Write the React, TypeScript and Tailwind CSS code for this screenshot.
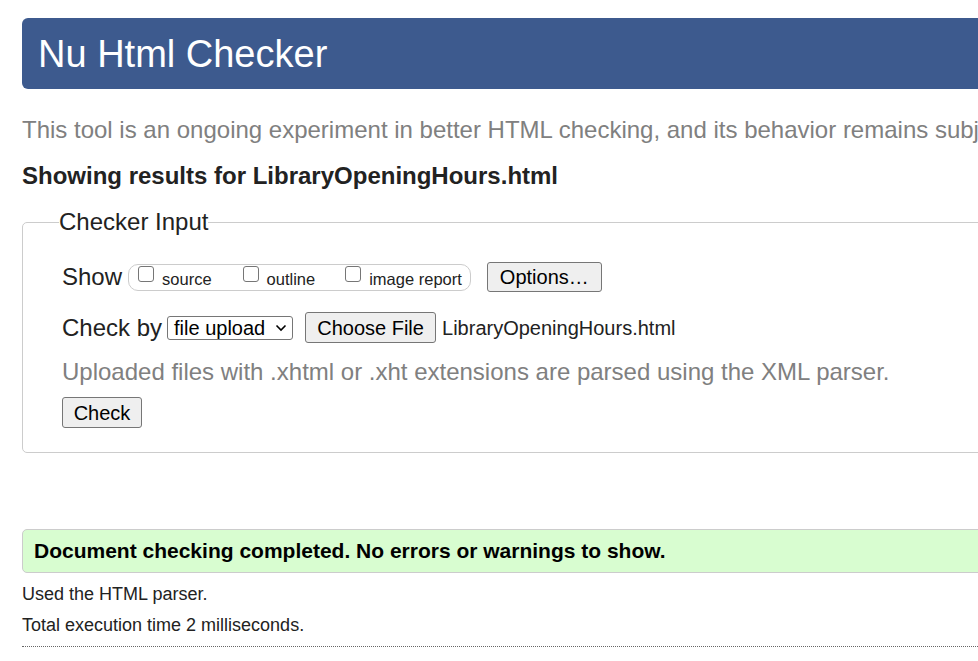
export default function App() {
  return (
    <div className="w-[978px] h-[661px] overflow-hidden bg-white font-['Liberation_Sans',Arial,sans-serif] text-[#222]">
      <div className="w-[1200px] pl-[22px] pt-[18px]">
        <header className="h-[71px] rounded-[6px] bg-[#3d5a8e] pl-[16px] flex items-center">
          <h1 className="text-[38px] leading-none text-white font-normal">Nu Html Checker</h1>
        </header>

        <p className="mt-[28px] text-[24px] leading-[26px] text-[#808080] whitespace-nowrap">
          This tool is an ongoing experiment in better HTML checking, and its behavior remains subject to change
        </p>

        <h2 className="mt-[20px] text-[24px] leading-[26px] font-bold text-[#222]">
          Showing results for LibraryOpeningHours.html
        </h2>

        <fieldset className="mt-[20px] border border-[#cccccc] rounded-[5px] pl-[39px] pb-[24px]">
          <legend className="-ml-[3px] px-0 text-[24px] leading-[26px]">Checker Input</legend>

          <div className="mt-[27px] flex items-center h-[30px]">
            <span className="text-[24px] leading-[26px]">Show</span>
            <div className="ml-[6px] h-[27px] flex items-center rounded-[10px] border border-[#cccccc] pl-[9px] pr-[8px]">
              <Check label="source" />
              <Check label="outline" className="ml-[31px]" />
              <Check label="image report" className="ml-[30px]" />
            </div>
            <button className="ml-[16px] h-[30px] px-[12px] rounded-[3px] border border-[#767676] bg-[#efefef] text-[20px] leading-none text-black">
              Options…
            </button>
          </div>

          <div className="mt-[20px] flex items-center h-[31px]">
            <span className="text-[24px] leading-[26px]">Check by</span>
            <div className="ml-[5px] h-[24px] w-[126px] flex items-center justify-between border border-[#767676] rounded-[3px] pl-[6px] pr-[5px]">
              <span className="text-[20px] leading-none text-black">file upload</span>
              <svg width="12" height="8" viewBox="0 0 12 8" fill="none">
                <path d="M1.5 1.5L6 6L10.5 1.5" stroke="#000" strokeWidth="1.6" />
              </svg>
            </div>
            <button className="ml-[12px] h-[31px] w-[131px] rounded-[3px] border border-[#767676] bg-[#efefef] text-[20px] leading-none text-black">
              Choose File
            </button>
            <span className="ml-[6px] text-[20px] leading-none text-[#222]">LibraryOpeningHours.html</span>
          </div>

          <p className="mt-[16px] text-[24px] leading-[26px] text-[#808080] whitespace-nowrap">
            Uploaded files with .xhtml or .xht extensions are parsed using the XML parser.
          </p>

          <button className="mt-[12px] h-[31px] w-[80px] rounded-[3px] border border-[#767676] bg-[#efefef] text-[20px] leading-none text-black">
            Check
          </button>
        </fieldset>

        <div className="mt-[76px] h-[44px] flex items-center rounded-[5px] border border-[#cccccc] bg-[#d8fdd0] pl-[11px]">
          <span className="text-[21px] font-bold text-black">
            Document checking completed. No errors or warnings to show.
          </span>
        </div>

        <p className="mt-[10px] text-[18px] leading-[22px]">Used the HTML parser.</p>
        <p className="mt-[9px] text-[18px] leading-[22px]">Total execution time 2 milliseconds.</p>
        <div className="mt-[10px] border-t border-dotted border-[#666]" />
      </div>
    </div>
  );
}

function Check({ label, className = "" }: { label: string; className?: string }) {
  return (
    <label className={"flex items-center " + className}>
      <span className="w-[16px] h-[16px] rounded-[3px] border border-[#767676] bg-white -mt-[6px]" />
      <span className="ml-[8px] text-[16.5px] leading-none mt-[4px]">{label}</span>
    </label>
  );
}
